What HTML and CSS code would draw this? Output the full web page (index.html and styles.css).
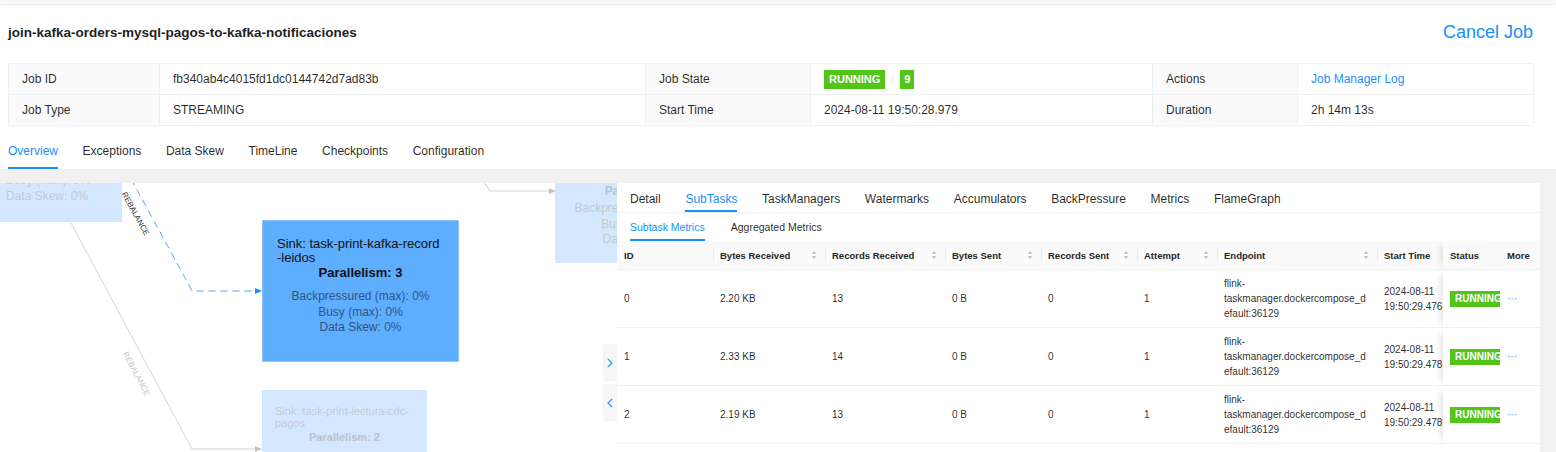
FILE: index.html
```html
<!DOCTYPE html>
<html lang="en">
<head>
<meta charset="utf-8">
<title>Job</title>
<link rel="stylesheet" href="styles.css">
</head>
<body>
<div class="topbar"></div>
<header class="job-header">
  <h1 class="job-title">join-kafka-orders-mysql-pagos-to-kafka-notificaciones</h1>
  <a class="cancel">Cancel Job</a>
</header>
<table class="desc">
  <colgroup>
    <col class="c1"><col class="c2"><col class="c3"><col class="c4"><col class="c5"><col class="c6">
  </colgroup>
  <tr>
    <th>Job ID</th><td>fb340ab4c4015fd1dc0144742d7ad83b</td>
    <th>Job State</th><td><span class="tag">RUNNING</span><span class="sep"></span><span class="tag small">9</span></td>
    <th>Actions</th><td><a class="link">Job Manager Log</a></td>
  </tr>
  <tr>
    <th>Job Type</th><td>STREAMING</td>
    <th>Start Time</th><td>2024-08-11 19:50:28.979</td>
    <th>Duration</th><td>2h 14m 13s</td>
  </tr>
</table>
<nav class="tabs">
  <span class="tab active">Overview</span>
  <span class="tab">Exceptions</span>
  <span class="tab">Data Skew</span>
  <span class="tab">TimeLine</span>
  <span class="tab">Checkpoints</span>
  <span class="tab">Configuration</span>
</nav>
<main class="main">
  <section class="graph">
    <svg class="edges" width="617" height="270" viewBox="0 0 617 270">
      <path d="M131 -4 L189 102 L192 108 L256 108" fill="none" stroke="#4ea4ff" stroke-width="1" stroke-dasharray="7 5"/>
      <path d="M255 105 L262 108 L255 111 Z" fill="#1890ff"/>
      <text x="135" y="31" transform="rotate(61 135 31)" text-anchor="middle" dominant-baseline="middle" class="elabel">REBALANCE</text>
      <path d="M71 40 L192 266 L256 266" fill="none" stroke="#d4d4d4" stroke-width="1"/>
      <path d="M255 263 L262 266 L255 269 Z" fill="#c4c4c4"/>
      <text x="136" y="191" transform="rotate(62 136 191)" text-anchor="middle" dominant-baseline="middle" class="elabel faded-label">REBALANCE</text>
      <path d="M482 -4 L490 8 L550 8" fill="none" stroke="#d4d4d4" stroke-width="1"/>
      <path d="M549 5 L556 8 L549 11 Z" fill="#c4c4c4"/>
    </svg>
    <div class="node faded n1">
      <div class="stat">Busy (max): 0%</div>
      <div class="stat">Data Skew: 0%</div>
    </div>
    <div class="node faded n2">
      <div class="par">Parallelism: 1</div>
      <div class="stats">
        <div>Backpressured (max): 0%</div>
        <div>Busy (max): 0%</div>
        <div>Data Skew: 0%</div>
      </div>
    </div>
    <div class="node n-main">
      <div class="ntitle">Sink: task-print-kafka-record<br>-leidos</div>
      <div class="par">Parallelism: 3</div>
      <div class="stats">
        <div>Backpressured (max): 0%</div>
        <div>Busy (max): 0%</div>
        <div>Data Skew: 0%</div>
      </div>
    </div>
    <div class="node faded n3">
      <div class="ntitle">Sink: task-print-lectura-cdc-pagos</div>
      <div class="par">Parallelism: 2</div>
    </div>
    <div class="toggles">
      <div class="toggle"><svg width="6" height="10" viewBox="0 0 6 10"><path d="M0.8 0.8 L5 5 L0.8 9.2" fill="none" stroke="#1890ff" stroke-width="1.1"/></svg></div>
      <div class="toggle"><svg width="6" height="10" viewBox="0 0 6 10"><path d="M5.2 0.8 L1 5 L5.2 9.2" fill="none" stroke="#1890ff" stroke-width="1.1"/></svg></div>
    </div>
  </section>
  <section class="panel">
    <div class="ptabs">
      <span class="ptab">Detail</span>
      <span class="ptab active">SubTasks</span>
      <span class="ptab">TaskManagers</span>
      <span class="ptab">Watermarks</span>
      <span class="ptab">Accumulators</span>
      <span class="ptab">BackPressure</span>
      <span class="ptab">Metrics</span>
      <span class="ptab">FlameGraph</span>
    </div>
    <div class="stabs">
      <span class="stab active">Subtask Metrics</span>
      <span class="stab">Aggregated Metrics</span>
    </div>
    <table class="grid">
      <colgroup>
        <col class="g-id"><col class="g-br"><col class="g-rr"><col class="g-bs"><col class="g-rs"><col class="g-at"><col class="g-ep"><col class="g-st"><col class="g-status"><col class="g-more">
      </colgroup>
      <thead>
        <tr>
          <th>ID</th>
          <th class="div"><div class="th-in"><span>Bytes Received</span><svg class="sort" width="6" height="10" viewBox="0 0 6 10"><path d="M0.5 4 L3 1 L5.5 4 Z M0.5 6 L3 9 L5.5 6 Z" fill="#c8c8c8"/></svg></div></th>
          <th class="div"><div class="th-in"><span>Records Received</span><svg class="sort" width="6" height="10" viewBox="0 0 6 10"><path d="M0.5 4 L3 1 L5.5 4 Z M0.5 6 L3 9 L5.5 6 Z" fill="#c8c8c8"/></svg></div></th>
          <th class="div"><div class="th-in"><span>Bytes Sent</span><svg class="sort" width="6" height="10" viewBox="0 0 6 10"><path d="M0.5 4 L3 1 L5.5 4 Z M0.5 6 L3 9 L5.5 6 Z" fill="#c8c8c8"/></svg></div></th>
          <th class="div"><div class="th-in"><span>Records Sent</span><svg class="sort" width="6" height="10" viewBox="0 0 6 10"><path d="M0.5 4 L3 1 L5.5 4 Z M0.5 6 L3 9 L5.5 6 Z" fill="#c8c8c8"/></svg></div></th>
          <th class="div"><div class="th-in"><span>Attempt</span><svg class="sort" width="6" height="10" viewBox="0 0 6 10"><path d="M0.5 4 L3 1 L5.5 4 Z M0.5 6 L3 9 L5.5 6 Z" fill="#c8c8c8"/></svg></div></th>
          <th class="div"><div class="th-in"><span>Endpoint</span><svg class="sort" width="6" height="10" viewBox="0 0 6 10"><path d="M0.5 4 L3 1 L5.5 4 Z M0.5 6 L3 9 L5.5 6 Z" fill="#c8c8c8"/></svg></div></th>
          <th class="div">Start Time</th>
          <th class="fixed">Status</th>
          <th class="more-h">More</th>
        </tr>
      </thead>
      <tbody>
        <tr>
          <td>0</td><td>2.20 KB</td><td>13</td><td>0 B</td><td>0</td><td>1</td>
          <td class="ep">flink-taskmanager.dockercompose_default:36129</td>
          <td class="st">2024-08-11 19:50:29.476</td>
          <td class="fixed"><span class="tag t-sm">RUNNING</span></td>
          <td class="more">···</td>
        </tr>
        <tr>
          <td>1</td><td>2.33 KB</td><td>14</td><td>0 B</td><td>0</td><td>1</td>
          <td class="ep">flink-taskmanager.dockercompose_default:36129</td>
          <td class="st">2024-08-11 19:50:29.478</td>
          <td class="fixed"><span class="tag t-sm">RUNNING</span></td>
          <td class="more">···</td>
        </tr>
        <tr>
          <td>2</td><td>2.19 KB</td><td>13</td><td>0 B</td><td>0</td><td>1</td>
          <td class="ep">flink-taskmanager.dockercompose_default:36129</td>
          <td class="st">2024-08-11 19:50:29.478</td>
          <td class="fixed"><span class="tag t-sm">RUNNING</span></td>
          <td class="more">···</td>
        </tr>
      </tbody>
    </table>
  </section>
</main>
</body>
</html>
```
FILE: styles.css
```css
* { box-sizing: border-box; }
html, body { margin: 0; padding: 0; }
body {
  font-family: "Liberation Sans", Arial, Helvetica, sans-serif;
  color: rgba(0, 0, 0, 0.85);
  background: #fff;
  width: 1556px;
  height: 452px;
  overflow: hidden;
}

.topbar {
  height: 4px;
  background: #f8f8f8;
  box-shadow: 0 1px 2px rgba(0, 0, 0, 0.08);
}

.job-header {
  display: flex;
  justify-content: space-between;
  align-items: center;
  height: 56px;
  padding: 0 23px 0 8px;
  margin-bottom: 3px;
}
.job-title {
  margin: 0;
  font-size: 13.5px;
  font-weight: bold;
  color: #1f1f1f;
}
.cancel {
  font-size: 18px;
  color: #1890ff;
}

.desc {
  margin-left: 8px;
  width: 1525px;
  border-collapse: collapse;
  table-layout: fixed;
  font-size: 12px;
  border: 1px solid #f0f0f0;
}
.desc .c1 { width: 151px; }
.desc .c2 { width: 486px; }
.desc .c3 { width: 165px; }
.desc .c4 { width: 342px; }
.desc .c5 { width: 145px; }
.desc .c6 { width: 236px; }
.desc th, .desc td {
  height: 31px;
  padding: 0 13px;
  border: 1px solid #f0f0f0;
  text-align: left;
  font-weight: normal;
  white-space: nowrap;
}
.desc th { background: #fafafa; }
.link { color: #1890ff; }

.tag {
  display: inline-block;
  background: #52c41a;
  color: #fff;
  font-weight: bold;
  font-size: 11px;
  line-height: 19px;
  padding: 0 5px;
  vertical-align: middle;
  white-space: nowrap;
}
.tag.small { padding: 0 4px; }
.sep {
  display: inline-block;
  width: 1px;
  height: 10px;
  background: #ececec;
  margin: 0 7px;
  vertical-align: middle;
}

.tabs {
  display: flex;
  gap: 24.6px;
  padding-left: 8px;
  margin-top: 11px;
  height: 32px;
}
.tab {
  font-size: 12px;
  line-height: 14px;
  padding: 7px 0 9px;
  border-bottom: 2px solid transparent;
}
.tab.active {
  color: #1890ff;
  border-bottom-color: #1890ff;
}

.main {
  display: flex;
  background: #f1f1f1;
  padding-top: 14px;
  height: 284px;
}
.graph {
  position: relative;
  flex: none;
  width: 617px;
  height: 270px;
  background: #fff;
  overflow: hidden;
}
.edges {
  position: absolute;
  left: 0;
  top: 0;
  overflow: visible;
}
.elabel {
  font-size: 8px;
  fill: #333;
  font-family: "Liberation Sans", Arial, sans-serif;
}
.faded-label { fill: #c4c4c4; }

.node {
  position: absolute;
}
.node.faded {
  background: #d3e8ff;
  color: #c3cad2;
}
.n1 {
  left: 0;
  top: -60px;
  width: 122px;
  height: 99px;
  display: flex;
  flex-direction: column;
  justify-content: flex-end;
  padding: 0 0 18px 6px;
  font-size: 12px;
  line-height: 15.5px;
}
.n2 {
  left: 555px;
  top: -20px;
  width: 197px;
  height: 100px;
  padding: 20px 20px 0 0;
  text-align: center;
  font-size: 12px;
}
.n2 .par {
  font-weight: bold;
  line-height: 16px;
  color: #b9c1c9;
}
.n2 .stats {
  margin-top: 2px;
  line-height: 15.5px;
}
.n-main {
  left: 262px;
  top: 37px;
  width: 197px;
  height: 142px;
  background: #5eaeff;
  border: 1px solid #8cc5ff;
  padding: 16px 14px 0;
  color: #111;
}
.n-main .ntitle {
  font-size: 13px;
  line-height: 14px;
}
.n-main .par {
  font-size: 13px;
  font-weight: bold;
  line-height: 16px;
  text-align: center;
}
.n-main .stats {
  margin-top: 8px;
  font-size: 12px;
  line-height: 15.5px;
  text-align: center;
  color: #2f5580;
}
.n3 {
  left: 262px;
  top: 207px;
  width: 165px;
  height: 100px;
  padding: 15px 13px 0 13px;
  font-size: 11px;
}
.n3 .ntitle { line-height: 12px; }
.n3 .par {
  margin-top: 2px;
  line-height: 13px;
  font-weight: bold;
  text-align: center;
  color: #b9c1c9;
}

.toggles {
  position: absolute;
  right: 0;
  top: 161px;
  display: flex;
  flex-direction: column;
  gap: 3px;
}
.toggle {
  width: 14px;
  height: 37px;
  background: #f6f6f6;
  display: flex;
  align-items: center;
  justify-content: center;
}

.panel {
  flex: none;
  width: 923px;
  height: 270px;
  background: #fff;
  overflow: hidden;
}
.ptabs {
  display: flex;
  gap: 24.7px;
  padding-left: 13px;
  height: 30px;
  border-bottom: 1px solid #f0f0f0;
}
.ptab {
  font-size: 12px;
  line-height: 14px;
  padding-top: 9px;
  border-bottom: 2px solid transparent;
}
.ptab.active {
  color: #1890ff;
  border-bottom-color: #1890ff;
}
.stabs {
  display: flex;
  gap: 26px;
  padding-left: 13px;
  height: 28px;
}
.stab {
  font-size: 10.5px;
  line-height: 12px;
  padding-top: 8px;
  border-bottom: 2px solid transparent;
}
.stab.active {
  color: #1890ff;
  border-bottom-color: #1890ff;
}

.grid {
  width: 923px;
  table-layout: fixed;
  border-collapse: separate;
  border-spacing: 0;
  font-size: 10px;
}
.g-id { width: 96px; }
.g-br { width: 112px; }
.g-rr { width: 120px; }
.g-bs { width: 96px; }
.g-rs { width: 96px; }
.g-at { width: 80px; }
.g-ep { width: 160px; }
.g-st { width: 66px; }
.g-status { width: 57px; }
.g-more { width: 40px; }

.grid th {
  height: 29px;
  padding: 0 7px;
  background: #fafafa;
  border-bottom: 1px solid #f0f0f0;
  font-size: 9.5px;
  font-weight: bold;
  text-align: left;
  white-space: nowrap;
  position: relative;
  color: #262626;
}
.grid th.div::before {
  content: "";
  position: absolute;
  left: 0;
  top: 8px;
  width: 1px;
  height: 13px;
  background: rgba(0, 0, 0, 0.06);
}
.th-in {
  display: flex;
  align-items: center;
}
.sort {
  margin-left: auto;
  margin-right: 1px;
}
.grid td {
  height: 58px;
  padding: 0 7px;
  border-bottom: 1px solid #f0f0f0;
  line-height: 15px;
  overflow: hidden;
  vertical-align: middle;
}
.grid td.ep { overflow-wrap: anywhere; }
.grid td.st { white-space: normal; }
.grid .fixed {
  position: relative;
  z-index: 1;
  background: #fff;
  box-shadow: -7px 0 7px -5px rgba(0, 0, 0, 0.12);
  white-space: nowrap;
  overflow: hidden;
}
.grid th.fixed { background: #fafafa; }
.tag.t-sm {
  font-size: 10px;
  line-height: 16px;
  padding: 0 5px;
}
.more {
  color: #1890ff;
  white-space: nowrap;
}
```
